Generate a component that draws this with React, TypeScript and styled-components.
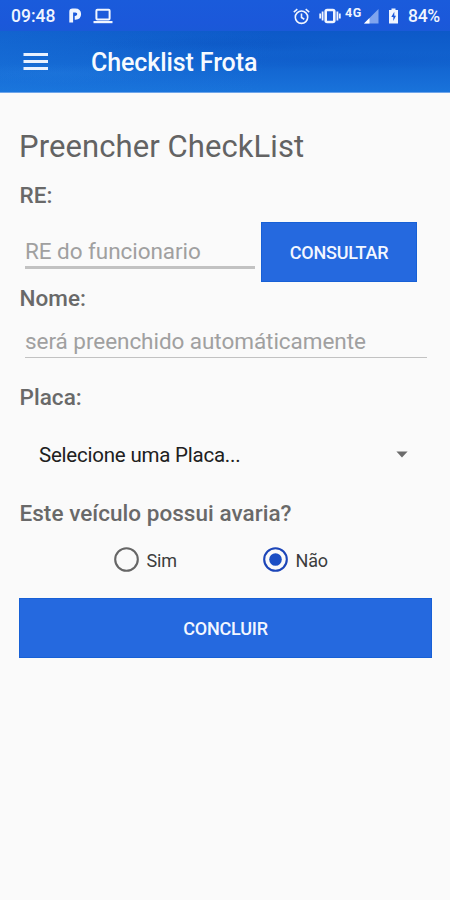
import React from "react";
import styled, { createGlobalStyle } from "styled-components";

const GlobalStyle = createGlobalStyle`
  *, *::before, *::after { box-sizing: border-box; }
  body {
    margin: 0;
    background: #fafafa;
    font-family: Roboto, "Liberation Sans", sans-serif;
    -webkit-font-smoothing: antialiased;
  }
`;

const Screen = styled.div`
  width: 450px;
  height: 900px;
  background: #fafafa;
  overflow: hidden;
`;

const StatusBar = styled.header`
  display: flex;
  align-items: center;
  height: 31px;
  padding: 1px 8px 0 11px;
  color: #f0f5ff;
  background: linear-gradient(#1a5bdb, #1b58da 75%, #1a59d8);
  svg { display: block; flex: none; }
`;

const Clock = styled.span`
  width: 57px;
  font-size: 17.5px;
  font-weight: 500;
  line-height: 28px;
  white-space: nowrap;
`;

const StatusIcons = styled.div<{ $end?: boolean; $gap?: number }>`
  display: flex;
  align-items: center;
  gap: ${(p) => p.$gap ?? 0}px;
  margin-left: ${(p) => (p.$end ? "auto" : "0")};
`;

const Battery = styled.span`
  width: 34px;
  margin-left: 9px;
  font-size: 17.5px;
  font-weight: 500;
  line-height: 28px;
  letter-spacing: -0.3px;
  white-space: nowrap;
`;

const Network = styled.span`
  width: 18px;
  height: 24px;
  margin-left: 4px;
  font-size: 12.5px;
  font-weight: 700;
  line-height: 18px;
  letter-spacing: 0.6px;
`;

const AppBar = styled.div`
  display: flex;
  align-items: center;
  height: 62px;
  padding: 3px 0 0 23px;
  border-bottom: 1px solid #6ea5ea;
  background:
    radial-gradient(ellipse 190px 9px at 350px 30px, rgba(0, 65, 180, 0.13), transparent),
    radial-gradient(ellipse 150px 8px at 220px 13px, rgba(0, 60, 170, 0.12), transparent),
    radial-gradient(ellipse 120px 10px at 60px 42px, rgba(60, 150, 240, 0.12), transparent),
    linear-gradient(100deg, rgba(30, 125, 225, 0.3), transparent 60%),
    linear-gradient(#0d59c8, #1264d0 55%, #1973db);
`;

const MenuButton = styled.button`
  display: flex;
  width: 68px;
  margin-top: -3px;
  padding: 0;
  border: 0;
  background: none;
`;

const AppTitle = styled.h1`
  margin: 0;
  color: #f6faff;
  font-size: 25px;
  font-weight: 500;
  line-height: 32px;
  letter-spacing: -0.1px;
`;

const Form = styled.main`
  display: flex;
  flex-direction: column;
  padding: 36px 18px 0 19px;
`;

const Heading = styled.h2`
  margin: 0;
  color: #636363;
  font-size: 31px;
  font-weight: 400;
  line-height: 36px;
  letter-spacing: 0.08px;
`;

const Label = styled.label<{ $top: number }>`
  margin-top: ${(p) => p.$top}px;
  padding-left: 0.5px;
  color: #696969;
  font-size: 22.5px;
  font-weight: 500;
  line-height: 26px;
  letter-spacing: 0.04px;
  white-space: nowrap;
`;

const SearchRow = styled.div`
  display: flex;
  height: 60px;
  margin-top: 14px;
`;

const Field = styled.input<{ $line: number; $width: number; $height: number; $top: number }>`
  width: ${(p) => p.$width}px;
  height: ${(p) => p.$height}px;
  margin: ${(p) => p.$top}px 6px 0;
  padding: 0 0 ${(p) => 3 - p.$line}px;
  border: 0;
  border-bottom: ${(p) => p.$line}px solid #c2c2c2;
  border-radius: 0;
  outline: 0;
  background: none;
  color: #333;
  font: 400 22.5px/30px Roboto, sans-serif;
  letter-spacing: -0.05px;
  &::placeholder { color: #a0a0a0; opacity: 1; }
`;

const ActionButton = styled.button<{ $width: number }>`
  flex: none;
  width: ${(p) => p.$width}px;
  height: 60px;
  padding: 1px 0 0;
  border: 1px solid #1760d6;
  background: #2569df;
  color: #f3f7ff;
  font: 500 18px/24px Roboto, sans-serif;
  letter-spacing: -0.2px;
`;

const Select = styled.div`
  display: flex;
  align-items: center;
  justify-content: space-between;
  height: 30px;
  margin-top: 29px;
  padding: 0 24px 0 20px;
  color: #202020;
  font-size: 20.5px;
  line-height: 30px;
  letter-spacing: -0.22px;
`;

const SelectText = styled.span`
  padding-top: 1px;
`;

const RadioGroup = styled.div`
  display: flex;
  height: 26px;
  margin: 21px 0 25px 94px;
`;

const Radio = styled.label`
  display: flex;
  align-items: center;
  width: 149px;
  height: 26px;
  gap: 7.5px;
  color: #3c3c3c;
  font-size: 18px;
  line-height: 25px;
  letter-spacing: -0.2px;
  svg { flex: none; }
`;

const RadioText = styled.span`
  padding-top: 1px;
`;

function RadioMark({ checked = false }: { checked?: boolean }) {
  const color = checked ? "#1c45b8" : "#666";
  return (
    <svg width="26" height="26" viewBox="0 0 26 26">
      <circle cx="13.5" cy="12.5" r="11.3" fill="none" stroke={color} strokeWidth="2.1" />
      {checked && <circle cx="13.5" cy="12.5" r="6.3" fill="#1c4fc4" />}
    </svg>
  );
}

function VibrateIcon() {
  return (
    <svg width="22" height="16" viewBox="0 0 22 16">
      <rect x="6.7" y="2" width="8.6" height="12" rx="1.5" fill="none" stroke="currentColor" strokeWidth="2.6" />
      <path d="M3.6 3.5V12.5M18.4 3.5V12.5M1.2 5.5V10.5M20.8 5.5V10.5" stroke="currentColor" strokeWidth="1.8" />
    </svg>
  );
}

function BatteryIcon() {
  return (
    <svg width="20" height="16" viewBox="0 0 20 16">
      <path d="M10 2h2.5V.5h4V2H19v13.5h-9Z" fill="currentColor" />
      <path d="M15.3 3.8 12.3 9h2v4l2.7-5.2h-1.7Z" fill="#1b58da" />
    </svg>
  );
}

export default function App() {
  return (
    <>
      <GlobalStyle />
      <Screen>
        <StatusBar>
          <Clock>09:48</Clock>
          <StatusIcons $gap={11}>
            <svg width="14" height="16" viewBox="0 0 14 16">
              <path d="M3.2 14.5V3.7Q3.2 2.5 4.5 2.5H7.3Q11.2 2.5 11.2 6.1T7.3 9.8H6.7" fill="none" stroke="currentColor" strokeWidth="3.8" />
            </svg>
            <svg width="20" height="16" viewBox="0 0 20 16">
              <rect x="3.4" y="1.8" width="13.2" height="9.7" rx="1" fill="none" stroke="currentColor" strokeWidth="2" />
              <path d="M.5 14.1H19.5" stroke="currentColor" strokeWidth="2.2" />
            </svg>
          </StatusIcons>
          <StatusIcons $end>
            <StatusIcons $gap={9}>
              <svg width="17" height="17" viewBox="0 0 17 17" fill="none" stroke="currentColor" strokeWidth="1.6">
                <circle cx="8.5" cy="9.2" r="6.2" />
                <path d="M.8 4.1 4.3 1.2M16.2 4.1 12.7 1.2M8.5 5.5v4l2.8 1.7" />
              </svg>
              <VibrateIcon />
            </StatusIcons>
            <Network>4G</Network>
            <svg width="16" height="16" viewBox="0 0 16 16">
              <path d="M15.5 1V15.5H1Z" fill="#7fa4ee" />
              <path d="M6.5 10V15.5H1Z" fill="#fff" />
            </svg>
            <BatteryIcon />
            <Battery>84%</Battery>
          </StatusIcons>
        </StatusBar>
        <AppBar>
          <MenuButton aria-label="Menu">
            <svg width="26" height="18" viewBox="0 0 26 18">
              <path d="M.5 1.5H25M.5 8.5H25M.5 15.5H25" stroke="#e8f1ff" strokeWidth="3" />
            </svg>
          </MenuButton>
          <AppTitle>Checklist Frota</AppTitle>
        </AppBar>
        <Form>
          <Heading>Preencher CheckList</Heading>
          <Label $top={17}>RE:</Label>
          <SearchRow>
            <Field $width={230} $height={34} $line={3} $top={13} placeholder="RE do funcionario" />
            <ActionButton $width={156}>CONSULTAR</ActionButton>
          </SearchRow>
          <Label $top={3}>Nome:</Label>
          <Field $width={402} $height={32} $line={1} $top={15} placeholder="será preenchido automáticamente" />
          <Label $top={26}>Placa:</Label>
          <Select>
            <SelectText>Selecione uma Placa...</SelectText>
            <svg width="12" height="7" viewBox="0 0 12 7"><path d="M.4.5H11.6L6 6.5Z" fill="#6b6b6b" /></svg>
          </Select>
          <Label $top={31}>Este veículo possui avaria?</Label>
          <RadioGroup>
            <Radio><RadioMark /><RadioText>Sim</RadioText></Radio>
            <Radio><RadioMark checked /><RadioText>Não</RadioText></Radio>
          </RadioGroup>
          <ActionButton $width={413}>CONCLUIR</ActionButton>
        </Form>
      </Screen>
    </>
  );
}
